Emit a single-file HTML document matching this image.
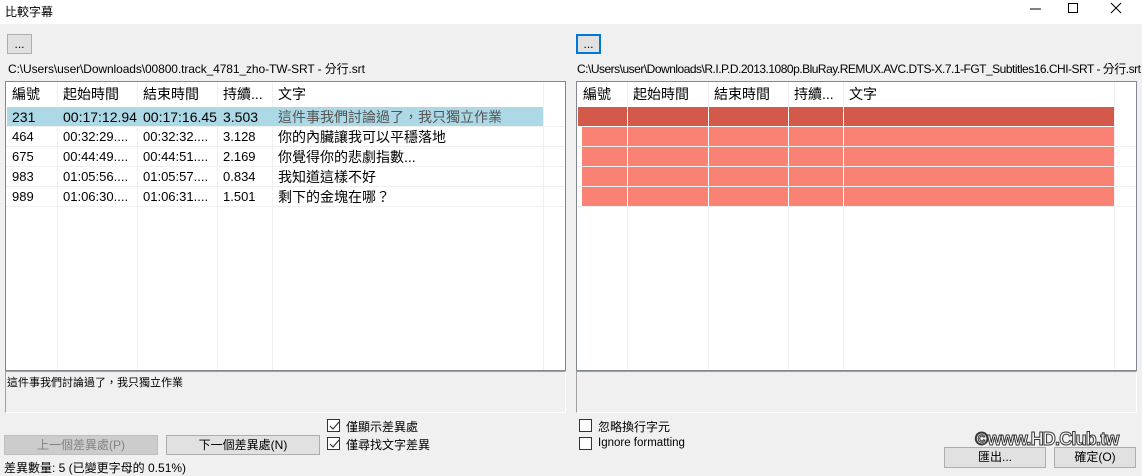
<!DOCTYPE html>
<html><head><meta charset="utf-8"><style>
*{margin:0;padding:0;box-sizing:border-box}
body{width:1142px;height:476px;background:#f0f0f0;position:relative;overflow:hidden;font-family:"Liberation Sans","Noto Sans CJK TC",sans-serif;font-size:12px;color:#000}
.a{position:absolute;white-space:nowrap}
.title{left:0;top:0;width:1142px;height:24px;background:#fff}
.btn{position:absolute;background:#e1e1e1;border:1px solid #adadad;text-align:center;font-size:12px;line-height:18px}
.list{position:absolute;background:#fff;border:1px solid #828790;overflow:hidden}
.row{position:absolute;left:0;height:20px;width:100%;border-bottom:1px solid #f0f0f0}
.c{position:absolute;top:0;height:100%;font-size:14px;line-height:20px;padding-left:6px;white-space:nowrap;overflow:hidden}
.s{font-size:13px}
.vl{position:absolute;top:0;bottom:0;width:1px;background:#f0f0f0}
.cb{position:absolute;width:13px;height:13px;border:1px solid #333;background:#fff}
.tb{position:absolute;border:1px solid #a0a0a0;border-right-color:#fff;border-bottom-color:#fff;background:#f0f0f0}
</style></head><body>
<div class="a title"></div>
<div class="a" style="left:5px;top:3px;font-size:12px">比較字幕</div>
<svg class="a" style="left:1020px;top:0" width="122" height="18"><path d="M10 9h11" stroke="#000"/><rect x="48.5" y="3.5" width="9" height="9" fill="none" stroke="#000"/><path d="M91 3l10 10M101 3l-10 10" stroke="#000"/></svg>

<div class="btn" style="left:7px;top:34px;width:25px;height:20px">...</div>
<div class="btn" style="left:576px;top:34px;width:25px;height:20px;border:2px solid #0078d7;line-height:16px">...</div>
<div class="a" style="left:8px;top:60px;letter-spacing:-0.1px">C:\Users\user\Downloads\00800.track_4781_zho-TW-SRT - 分行.srt</div>
<div class="a" style="left:577px;top:60px;letter-spacing:-0.5px">C:\Users\user\Downloads\R.I.P.D.2013.1080p.BluRay.REMUX.AVC.DTS-X.7.1-FGT_Subtitles16.CHI-SRT - 分行.srt</div>

<div class="list" style="left:5px;top:81px;width:561px;height:290px">
 <div class="row" style="top:0;height:25px;border:none"><div class="c" style="left:0;line-height:25px">編號</div><div class="c" style="left:51px;line-height:25px">起始時間</div><div class="c" style="left:131px;line-height:25px">結束時間</div><div class="c" style="left:211px;line-height:25px">持續...</div><div class="c" style="left:266px;line-height:25px">文字</div></div>
 <div class="vl" style="left:51px"></div><div class="vl" style="left:131px"></div><div class="vl" style="left:211px"></div><div class="vl" style="left:266px"></div><div class="vl" style="left:537px"></div>
 <div class="row" style="top:25px"><div style="position:absolute;left:1px;top:0;width:536px;height:19px;background:#add8e6"></div></div>
 <div class="row" style="top:25px;border:none"><div class="c" style="left:0">231</div><div class="c" style="left:51px;width:80px">00:17:12.945</div><div class="c" style="left:131px;width:80px">00:17:16.451</div><div class="c" style="left:211px">3.503</div><div class="c" style="left:266px;color:#555">這件事我們討論過了，我只獨立作業</div></div>
 <div class="row" style="top:45px"><div class="c s" style="left:0">464</div><div class="c s" style="left:51px">00:32:29....</div><div class="c s" style="left:131px">00:32:32....</div><div class="c s" style="left:211px">3.128</div><div class="c" style="left:266px">你的內臟讓我可以平穩落地</div></div>
 <div class="row" style="top:65px"><div class="c s" style="left:0">675</div><div class="c s" style="left:51px">00:44:49....</div><div class="c s" style="left:131px">00:44:51....</div><div class="c s" style="left:211px">2.169</div><div class="c" style="left:266px">你覺得你的悲劇指數...</div></div>
 <div class="row" style="top:85px"><div class="c s" style="left:0">983</div><div class="c s" style="left:51px">01:05:56....</div><div class="c s" style="left:131px">01:05:57....</div><div class="c s" style="left:211px">0.834</div><div class="c" style="left:266px">我知道這樣不好</div></div>
 <div class="row" style="top:105px"><div class="c s" style="left:0">989</div><div class="c s" style="left:51px">01:06:30....</div><div class="c s" style="left:131px">01:06:31....</div><div class="c s" style="left:211px">1.501</div><div class="c" style="left:266px">剩下的金塊在哪？</div></div>
</div>

<div class="list" style="left:576px;top:81px;width:561px;height:290px">
 <div class="row" style="top:0;height:25px;border:none"><div class="c" style="left:0;line-height:25px">編號</div><div class="c" style="left:50px;line-height:25px">起始時間</div><div class="c" style="left:131px;line-height:25px">結束時間</div><div class="c" style="left:211px;line-height:25px">持續...</div><div class="c" style="left:266px;line-height:25px">文字</div></div>
 <div class="vl" style="left:50px"></div><div class="vl" style="left:131px"></div><div class="vl" style="left:211px"></div><div class="vl" style="left:266px"></div><div class="vl" style="left:537px"></div>
 <div class="row" style="top:45px"></div><div class="row" style="top:65px"></div><div class="row" style="top:85px"></div><div class="row" style="top:105px"></div>
 <div style="position:absolute;left:1px;top:25px;width:536px;height:19px;background:#d35a4b"></div>
 <div style="position:absolute;left:5px;top:45px;width:532px;height:19px;background:#f98274"></div>
 <div style="position:absolute;left:5px;top:65px;width:532px;height:19px;background:#f98274"></div>
 <div style="position:absolute;left:5px;top:85px;width:532px;height:19px;background:#f98274"></div>
 <div style="position:absolute;left:5px;top:105px;width:532px;height:19px;background:#f98274"></div>
 <div class="vl" style="left:50px;top:25px;height:100px;background:#fff"></div><div class="vl" style="left:131px;top:25px;height:100px;background:#fff"></div><div class="vl" style="left:211px;top:25px;height:100px;background:#fff"></div><div class="vl" style="left:266px;top:25px;height:100px;background:#fff"></div>
</div>

<div class="tb" style="left:5px;top:371px;width:561px;height:42px"><div style="position:absolute;left:1px;top:2px;font-size:11px">這件事我們討論過了，我只獨立作業</div></div>
<div class="tb" style="left:576px;top:371px;width:561px;height:42px"></div>

<div class="btn" style="left:4px;top:435px;width:154px;height:20px;background:#cccccc;border-color:#bfbfbf;color:#838383">上一個差異處(P)</div>
<div class="btn" style="left:166px;top:435px;width:154px;height:20px">下一個差異處(N)</div>
<div class="cb" style="left:327px;top:419px;border-color:#333"></div><svg class="a" style="left:328px;top:420px" width="13" height="13"><path d="M2 6l3 3 6-7" stroke="#333" fill="none" stroke-width="1.2"/></svg>
<div class="a" style="left:346px;top:418px">僅顯示差異處</div>
<div class="cb" style="left:327px;top:437px"></div><svg class="a" style="left:328px;top:438px" width="13" height="13"><path d="M2 6l3 3 6-7" stroke="#333" fill="none" stroke-width="1.2"/></svg>
<div class="a" style="left:346px;top:436px">僅尋找文字差異</div>
<div class="cb" style="left:579px;top:419px"></div>
<div class="a" style="left:598px;top:418px">忽略換行字元</div>
<div class="cb" style="left:579px;top:437px"></div>
<div class="a" style="left:598px;top:437px;font-size:11.5px">Ignore formatting</div>
<div class="a" style="left:4px;top:459px">差異數量: 5 (已變更字母的 0.51%)</div>
<div class="btn" style="left:944px;top:447px;width:102px;height:21px">匯出...</div>
<div class="btn" style="left:1054px;top:447px;width:82px;height:21px">確定(O)</div>
<div class="a" style="left:975px;top:429px;font-size:18px;font-weight:bold;color:#fff;-webkit-text-stroke:1px #333;letter-spacing:-0.8px">©www.HD.Club.tw</div>
</body></html>
